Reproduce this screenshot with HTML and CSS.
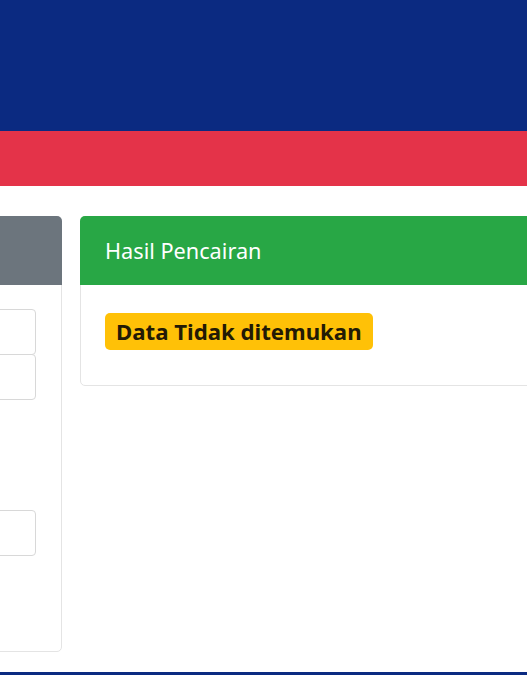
FILE: index.html
```html
<!DOCTYPE html>
<html lang="id">

<head>
    <meta charset="UTF-8" />
    <meta name="viewport" content="width=device-width, initial-scale=1" />
    <title>Cek Pencairan</title>
    <link rel="stylesheet" href="styles.css">
</head>

<body>

    <header class="top-bar"></header>
    <div class="accent-bar"></div>

    <main class="content">
        <section class="card card-search">
            <div class="card-header header-gray"></div>
            <div class="card-body">
                <input type="text" class="form-input">
                <input type="text" class="form-input">
                <input type="text" class="form-input form-input-gap">
            </div>
        </section>

        <section class="card card-result">
            <div class="card-header header-green">Hasil Pencairan</div>
            <div class="card-body">
                <span class="badge-warning">Data Tidak ditemukan</span>
            </div>
        </section>
    </main>

    <footer class="bottom-bar"></footer>

</body>

</html>
```

FILE: styles.css
```css
:root {
    --navy: #0b2a81;
    --red: #e43349;
    --gray: #6c757d;
    --green: #28a745;
    --yellow: #ffc107;
    --border: #e4e4e4;
}

body {
    margin: 0;
    font-family: 'Noto Sans', 'Open Sans', sans-serif;
    background: #ffffff;
    color: #212529;
    overflow: hidden;
    height: 675px;
    display: flex;
    flex-direction: column;
}

.top-bar {
    height: 131px;
    background: var(--navy);
}

.accent-bar {
    height: 55px;
    background: var(--red);
}

.content {
    display: flex;
    align-items: flex-start;
    gap: 18px;
    padding-top: 30px;
    margin-left: -191px;
    flex: 1;
    overflow: hidden;
}

.card {
    background: #fff;
    border: 1px solid var(--border);
    border-radius: 5px;
    flex-shrink: 0;
}

.card-search {
    width: 251px;
}

.card-result {
    width: 640px;
}

.card-header {
    height: 69px;
    box-sizing: border-box;
    border-radius: 5px 5px 0 0;
    margin: -1px -1px 0;
    color: #fff;
    font-size: 21.7px;
    line-height: 69px;
    padding: 0 25px;
}

.header-gray {
    background: var(--gray);
}

.header-green {
    background: var(--green);
}

.card-search .card-body {
    height: 366px;
    box-sizing: border-box;
    padding: 24px 25px 0 0;
    display: flex;
    flex-direction: column;
}

.form-input {
    height: 46px;
    box-sizing: border-box;
    border: 1px solid #d8d8d8;
    border-radius: 4px;
    background: #fff;
    margin: 0;
}

.form-input + .form-input {
    margin-top: -1px;
}

.form-input-gap {
    margin-top: 110px !important;
}

.card-result .card-body {
    padding: 28px 24px 35px;
}

.badge-warning {
    display: inline-block;
    background: var(--yellow);
    color: #231a05;
    font-weight: bold;
    font-size: 22.2px;
    line-height: 37px;
    padding: 0 11px;
    border-radius: 5px;
}

.bottom-bar {
    height: 3px;
    background: var(--navy);
    margin-top: auto;
}
```
